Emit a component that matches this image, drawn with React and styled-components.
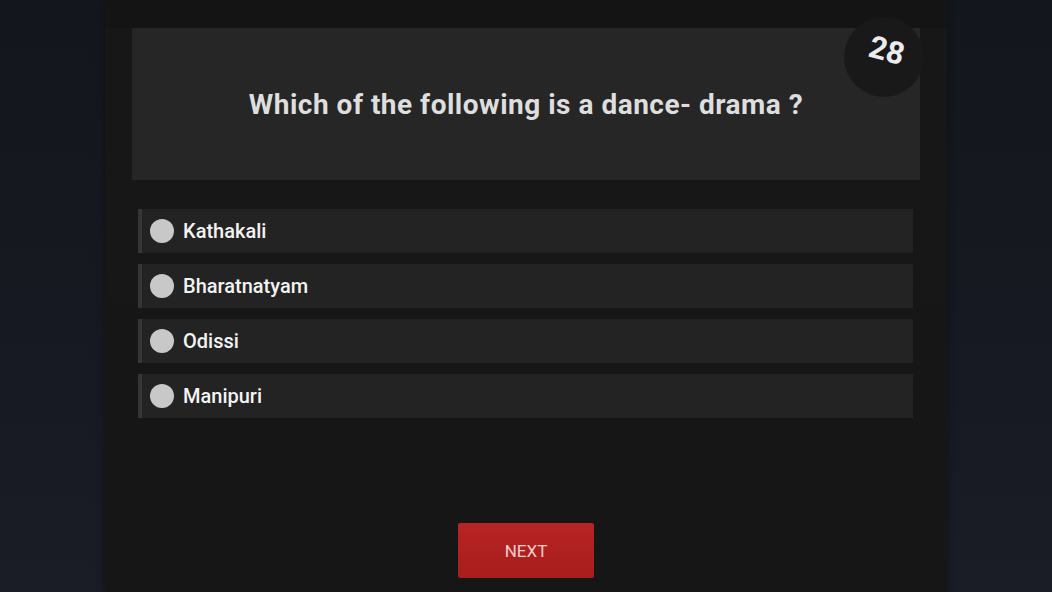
import React from 'react';
import styled, {createGlobalStyle} from 'styled-components';

const GlobalStyle = createGlobalStyle`
  html, body {
    margin: 0;
    padding: 0;
    height: 100%;
  }
  body {
    font-family: Roboto, "Noto Sans", Arial, sans-serif;
    background: #181a22;
  }
`;

const Page = styled.div`
  width: 100vw;
  height: 592px;
  overflow: hidden;
  background: linear-gradient(180deg, #14161d 0%, #1a1c26 100%);
`;

const Panel = styled.main`
  box-sizing: border-box;
  width: 842px;
  height: 592px;
  margin-left: 105px;
  padding: 28px 27px 0;
  background: linear-gradient(180deg, #141414 0, #141414 28px, #171717 28px, #161616 100%);
  box-shadow: 0 0 8px rgba(0, 0, 0, 0.35);
  display: flex;
  flex-direction: column;
`;

const QuestionCard = styled.section`
  position: relative;
  height: 152px;
  background: #262626;
  display: flex;
  align-items: center;
  justify-content: center;
`;

const QuestionText = styled.h1`
  margin: 0;
  font-size: 28px;
  font-weight: 700;
  letter-spacing: 0.5px;
  color: #dedede;
`;

const Timer = styled.div`
  position: absolute;
  top: -11px;
  left: 712px;
  width: 80px;
  height: 80px;
  border-radius: 50%;
  background: #191919;
  display: flex;
  align-items: center;
  justify-content: center;
`;

const TimerValue = styled.span`
  display: inline-block;
  transform: translate(3px, -7px) rotate(15deg);
  font-size: 31px;
  font-weight: 700;
  color: #ececec;
`;

const Options = styled.ul`
  list-style: none;
  margin: 29px 7px 0 6px;
  padding: 0;
  display: flex;
  flex-direction: column;
  gap: 11px;
`;

const Option = styled.li`
  height: 44px;
  box-sizing: border-box;
  border-left: 4px solid #363636;
  background: #232323;
  display: flex;
  align-items: center;
  padding-left: 8px;
  gap: 9px;
  cursor: pointer;
`;

const Radio = styled.span`
  width: 24px;
  height: 24px;
  border-radius: 50%;
  background: #c8c8c8;
  flex-shrink: 0;
`;

const Label = styled.span`
  font-size: 20px;
  font-weight: 500;
  color: #f4f4f4;
`;

const Footer = styled.div`
  display: flex;
  justify-content: center;
  margin-top: 105px;
`;

const NextButton = styled.button`
  width: 136px;
  height: 55px;
  border: none;
  border-radius: 2px;
  background: linear-gradient(180deg, #b72424 0%, #a81d1d 100%);
  color: #f5cfca;
  font-family: Roboto, Arial, sans-serif;
  font-size: 17px;
  font-weight: 400;
  cursor: pointer;
`;

const options = ['Kathakali', 'Bharatnatyam', 'Odissi', 'Manipuri'];

const App = () => (
  <Page>
    <GlobalStyle />
    <Panel>
      <QuestionCard>
        <QuestionText>Which of the following is a dance- drama ?</QuestionText>
        <Timer>
          <TimerValue>28</TimerValue>
        </Timer>
      </QuestionCard>
      <Options>
        {options.map(option => (
          <Option key={option}>
            <Radio />
            <Label>{option}</Label>
          </Option>
        ))}
      </Options>
      <Footer>
        <NextButton>NEXT</NextButton>
      </Footer>
    </Panel>
  </Page>
);

export default App;
